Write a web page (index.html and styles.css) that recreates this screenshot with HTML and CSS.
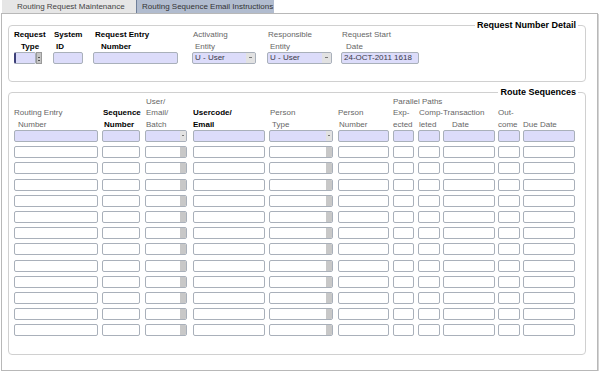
FILE: index.html
```html
<!DOCTYPE html>
<html lang="en">
<head>
    <meta charset="UTF-8">
    <title>Routing Sequence Email Instructions</title>
    <link rel="stylesheet" href="styles.css">
</head>
<body>
    <div class="tabs">
        <div class="tab">Routing Request Maintenance</div>
        <div class="tab active">Routing Sequence Email Instructions</div>
    </div>

    <div class="panel">
        <div class="group detail">
            <div class="group-title">Request Number Detail</div>
            <div class="fields">
                <div class="field f-type">
                    <div class="lbl strong"><span>Request</span><span class="i6">Type</span></div>
                    <div class="combo">
                        <span class="box cur focus"></span>
                        <span class="lov"></span>
                    </div>
                </div>
                <div class="field f-sys">
                    <div class="lbl strong"><span class="i1">System</span><span class="i3">ID</span></div>
                    <span class="box cur"></span>
                </div>
                <div class="field f-entry">
                    <div class="lbl strong"><span class="i2">Request Entry</span><span class="i8">Number</span></div>
                    <span class="box cur"></span>
                </div>
                <div class="field f-act">
                    <div class="lbl"><span class="i1">Activating</span><span class="i3">Entity</span></div>
                    <span class="box cur sel"><span class="val">U - User</span><b></b></span>
                </div>
                <div class="field f-resp">
                    <div class="lbl"><span class="i1">Responsible</span><span class="i3">Entity</span></div>
                    <span class="box cur sel"><span class="val">U - User</span><b></b></span>
                </div>
                <div class="field f-date">
                    <div class="lbl"><span class="i1">Request Start</span><span class="i5">Date</span></div>
                    <span class="box cur"><span class="val">24-OCT-2011 1618</span></span>
                </div>
            </div>
        </div>

        <div class="group seq">
            <div class="group-title">Route Sequences</div>
            <div class="cols header">
                <div class="lbl"><span>Routing Entry</span><span class="i4">Number</span></div>
                <div class="lbl strong"><span class="i1">Sequence</span><span class="i2">Number</span></div>
                <div class="lbl"><span class="i1">User/</span><span class="i1">Email/</span><span class="i1">Batch</span></div>
                <div class="lbl strong"><span>Usercode/</span><span>Email</span></div>
                <div class="lbl"><span class="i1">Person</span><span class="i3">Type</span></div>
                <div class="lbl"><span>Person</span><span class="i1">Number</span></div>
                <div class="lbl"><span>Parallel Paths</span><span>Exp-</span><span>ected</span></div>
                <div class="lbl"><span class="i1">Comp-</span><span class="i1">leted</span></div>
                <div class="lbl"><span>Transaction</span><span class="i9">Date</span></div>
                <div class="lbl"><span>Out-</span><span>come</span></div>
                <div class="lbl"><span>Due Date</span></div>
            </div>

            <div class="cols row cur"><span class="box"></span><span class="box"></span><span class="box sel"><b></b></span><span class="box"></span><span class="box sel"><b></b></span><span class="box"></span><span class="box"></span><span class="box"></span><span class="box"></span><span class="box"></span><span class="box"></span></div>
            <div class="cols row"><span class="box"></span><span class="box"></span><span class="box sel"><b></b></span><span class="box"></span><span class="box sel"><b></b></span><span class="box"></span><span class="box"></span><span class="box"></span><span class="box"></span><span class="box"></span><span class="box"></span></div>
            <div class="cols row"><span class="box"></span><span class="box"></span><span class="box sel"><b></b></span><span class="box"></span><span class="box sel"><b></b></span><span class="box"></span><span class="box"></span><span class="box"></span><span class="box"></span><span class="box"></span><span class="box"></span></div>
            <div class="cols row"><span class="box"></span><span class="box"></span><span class="box sel"><b></b></span><span class="box"></span><span class="box sel"><b></b></span><span class="box"></span><span class="box"></span><span class="box"></span><span class="box"></span><span class="box"></span><span class="box"></span></div>
            <div class="cols row"><span class="box"></span><span class="box"></span><span class="box sel"><b></b></span><span class="box"></span><span class="box sel"><b></b></span><span class="box"></span><span class="box"></span><span class="box"></span><span class="box"></span><span class="box"></span><span class="box"></span></div>
            <div class="cols row"><span class="box"></span><span class="box"></span><span class="box sel"><b></b></span><span class="box"></span><span class="box sel"><b></b></span><span class="box"></span><span class="box"></span><span class="box"></span><span class="box"></span><span class="box"></span><span class="box"></span></div>
            <div class="cols row"><span class="box"></span><span class="box"></span><span class="box sel"><b></b></span><span class="box"></span><span class="box sel"><b></b></span><span class="box"></span><span class="box"></span><span class="box"></span><span class="box"></span><span class="box"></span><span class="box"></span></div>
            <div class="cols row"><span class="box"></span><span class="box"></span><span class="box sel"><b></b></span><span class="box"></span><span class="box sel"><b></b></span><span class="box"></span><span class="box"></span><span class="box"></span><span class="box"></span><span class="box"></span><span class="box"></span></div>
            <div class="cols row"><span class="box"></span><span class="box"></span><span class="box sel"><b></b></span><span class="box"></span><span class="box sel"><b></b></span><span class="box"></span><span class="box"></span><span class="box"></span><span class="box"></span><span class="box"></span><span class="box"></span></div>
            <div class="cols row"><span class="box"></span><span class="box"></span><span class="box sel"><b></b></span><span class="box"></span><span class="box sel"><b></b></span><span class="box"></span><span class="box"></span><span class="box"></span><span class="box"></span><span class="box"></span><span class="box"></span></div>
            <div class="cols row"><span class="box"></span><span class="box"></span><span class="box sel"><b></b></span><span class="box"></span><span class="box sel"><b></b></span><span class="box"></span><span class="box"></span><span class="box"></span><span class="box"></span><span class="box"></span><span class="box"></span></div>
            <div class="cols row"><span class="box"></span><span class="box"></span><span class="box sel"><b></b></span><span class="box"></span><span class="box sel"><b></b></span><span class="box"></span><span class="box"></span><span class="box"></span><span class="box"></span><span class="box"></span><span class="box"></span></div>
            <div class="cols row"><span class="box"></span><span class="box"></span><span class="box sel"><b></b></span><span class="box"></span><span class="box sel"><b></b></span><span class="box"></span><span class="box"></span><span class="box"></span><span class="box"></span><span class="box"></span><span class="box"></span></div>
        </div>
    </div>
</body>
</html>
```

FILE: styles.css
```css
body {
    margin: 0;
    background-color: #ffffff;
    font-family: "Liberation Sans", Arial, sans-serif;
    font-size: 8px;
    color: #666666;
}

/* tab strip */
.tabs {
    display: flex;
    height: 13px;
}
.tab {
    width: 134px;
    margin-left: 2px;
    padding-left: 15px;
    box-sizing: border-box;
    background-color: #e6e6e6;
    color: #444444;
    font-size: 8px;
    line-height: 13px;
    white-space: nowrap;
}
.tab.active {
    width: 138px;
    margin-left: 0;
    padding-left: 5px;
    border-left: 1px solid #6f7f99;
    background-color: #b1bccf;
    color: #333333;
}

/* outer panel */
.panel {
    margin: 0 2px 0 1px;
    padding: 11px 11px 15px 6px;
    border: 1px solid #b8b8b8;
    box-shadow: 1px 1px 0 #d4d4d4;
}

.group {
    position: relative;
    border: 1px solid #d0d0d0;
    border-radius: 4px;
    padding-left: 5px;
}
.group-title {
    position: absolute;
    right: 7px;
    top: -6px;
    padding: 0 2px;
    background-color: #ffffff;
    color: #000000;
    font-size: 9px;
    font-weight: bold;
    line-height: 11px;
    white-space: nowrap;
}
.detail {
    padding-top: 3px;
    padding-bottom: 17px;
}
.seq {
    margin-top: 10px;
    padding-top: 2.5px;
    padding-bottom: 17.5px;
}

/* labels */
.lbl {
    line-height: 11.5px;
    white-space: nowrap;
}
.lbl span {
    display: block;
}
.strong {
    color: #000000;
    font-weight: bold;
}
.i1 { padding-left: 1px; }
.i2 { padding-left: 2px; }
.i3 { padding-left: 3px; }
.i4 { padding-left: 4px; }
.i5 { padding-left: 5px; }
.i6 { padding-left: 7px; }
.i8 { padding-left: 8px; }
.i9 { padding-left: 9px; }

/* boxes */
.box {
    display: flex;
    height: 12px;
    box-sizing: border-box;
    border: 1px solid #a9b0ba;
    border-radius: 2px;
    background-color: #ffffff;
    overflow: hidden;
}
.box.cur,
.row.cur .box {
    background-color: #dcdcfa;
}
.box .val {
    padding-left: 2px;
    color: #3a3a4a;
    line-height: 10px;
    white-space: nowrap;
}
.box.focus {
    border-left: 2px solid #3c3f78;
}
.sel b {
    width: 6px;
    margin: 0 0 0 auto;
    background-color: #c8c8c8;
}
.row.cur .sel b,
.box.cur.sel b {
    background-color: #e2e2e2;
    position: relative;
}
.row.cur .sel b::after,
.box.cur.sel b::after {
    content: "";
    position: absolute;
    left: 2px;
    top: 4px;
    width: 2px;
    height: 1px;
    background-color: #777777;
}
.box.cur.sel b {
    width: 9px;
}
.box.cur.sel b::after {
    left: 3px;
    width: 3px;
}

/* top detail fields */
.fields {
    display: flex;
    align-items: flex-end;
}
.f-type { width: 28px; }
.f-sys { width: 30px; margin-left: 11px; }
.f-entry { width: 85px; margin-left: 10px; }
.f-act { width: 64px; margin-left: 14px; }
.f-resp { width: 65px; margin-left: 11px; }
.f-date { width: 78px; margin-left: 9px; }

.combo {
    display: flex;
}
.combo .box {
    width: 22px;
}
.lov {
    position: relative;
    width: 6px;
    height: 12px;
    box-sizing: border-box;
    border: 1px solid #9a9a9a;
    background-color: #c4c4c4;
}
.lov::after {
    content: "";
    position: absolute;
    left: 1px;
    top: 4px;
    width: 2px;
    height: 2px;
    border-top: 1px solid #555555;
    border-bottom: 1px solid #555555;
}

/* route sequence grid */
.cols {
    display: flex;
    align-items: flex-end;
}
.cols > :nth-child(1) { width: 84px; }
.cols > :nth-child(2) { width: 38px; margin-left: 4px; }
.cols > :nth-child(3) { width: 42px; margin-left: 5px; }
.cols > :nth-child(4) { width: 72px; margin-left: 6px; }
.cols > :nth-child(5) { width: 64px; margin-left: 4px; }
.cols > :nth-child(6) { width: 51px; margin-left: 5px; }
.cols > :nth-child(7) { width: 21px; margin-left: 4px; }
.cols > :nth-child(8) { width: 22px; margin-left: 4px; }
.cols > :nth-child(9) { width: 52px; margin-left: 3px; }
.cols > :nth-child(10) { width: 22px; margin-left: 3px; }
.cols > :nth-child(11) { width: 52px; margin-left: 3px; }

.header .lbl {
    flex-shrink: 0;
}
.row {
    margin-top: 4.2px;
}
.header + .row {
    margin-top: 0;
}
.row .box {
    flex-shrink: 0;
}
```
